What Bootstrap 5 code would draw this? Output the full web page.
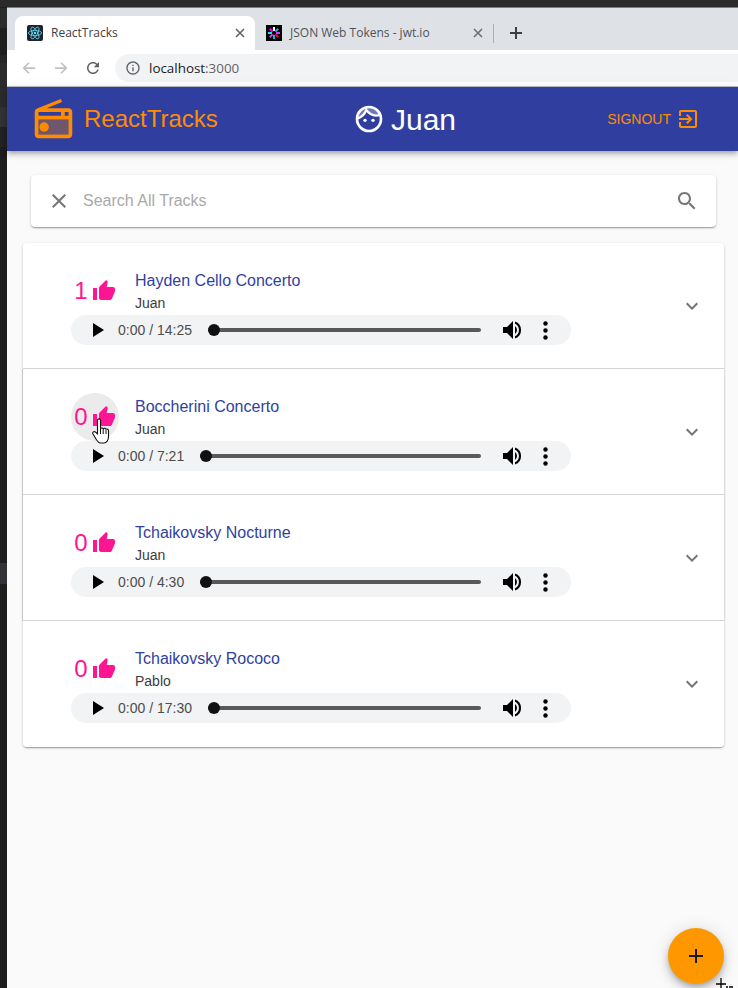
<!DOCTYPE html>
<html lang="en">
<head>
<meta charset="utf-8">
<title>ReactTracks</title>
<link href="https://cdn.jsdelivr.net/npm/bootstrap@5.3.0/dist/css/bootstrap.min.css" rel="stylesheet">
<style>
html,body{height:988px;overflow:hidden;margin:0}
body{background:#1e1e1e;font-family:"Liberation Sans",Arial,sans-serif;position:relative}
.topstrip{height:7px;background:#2b2b2b}
.blueline{height:1px;background:#3d8fd1;margin-left:7px}
.shell{height:980px}
.sidestrip{width:7px;flex:none;background:linear-gradient(#2b2b2b 0 20px,#1e1e1e 20px 47px,#252526 47px 55px,#2b2b2b 55px 99px,#333 99px 119px,#222 119px 139px,#1e1e1e 139px 555px,#333337 555px 576px,#1e1e1e 576px)}
.mainpane{flex:1;min-width:0;background:#fafafa}
.tabbar{height:42px;background:#dee1e6;padding:8px 0 0 8px;font-family:"Open Sans",sans-serif;font-size:12px;color:#3c4043}
.tab-on{width:240px;height:34px;background:#fff;border-radius:8px 8px 0 0;padding:0 10px 0 12px}
.tab-off{width:240px;height:34px;padding:0 12px 0 11px;color:#50545a}
.tab-label{margin-left:8px;white-space:nowrap}
.tab-x{margin-left:auto}
.tabsep{width:1px;height:19px;background:#a9adb2;margin:0 15px 0 -2px}
.toolbar{height:37px;background:#fff;border-bottom:1px solid #bfc1c4;padding:4px 0 4px 15px}
.omnibox{height:28px;flex:1;background:#f1f3f4;border-radius:14px 0 0 14px;padding-left:10px;margin-left:13px;font-family:"Open Sans",sans-serif;font-size:13.4px;color:#202124}
.omnibox span{color:#5f6368}
.navicon{width:32px}
.reloadicon{margin-left:-2px}
.appbar{height:64px;background:#303f9f!important;padding:0 38px 0 24px!important;flex-wrap:nowrap!important;justify-content:flex-start!important;position:relative;z-index:2;box-shadow:0 2px 4px -1px rgba(0,0,0,.2),0 4px 5px rgba(0,0,0,.14),0 1px 10px rgba(0,0,0,.12)}
.brandbox{width:322px;color:#ff8c00;font-size:24px;gap:8px}
.userbox{color:#fff;font-size:30px;gap:6px}
.signout{margin-left:auto;color:#ff8c00;font-size:14px;gap:5px;text-transform:uppercase}
.pagebody{padding:24px 14px 0 16px}
.searchcard{height:52px;margin:0 8px 16px 8px;border:0;border-radius:4px;box-shadow:0 1px 3px rgba(0,0,0,.2),0 1px 1px rgba(0,0,0,.14),0 2px 1px -1px rgba(0,0,0,.12);padding:0 17px 0 16px;flex-direction:row;align-items:center}
.searchfield{flex:1;border:0;outline:0;background:transparent;margin-left:10px;font:16px "Liberation Sans",Arial,sans-serif;color:#333}
.searchfield::placeholder{color:#a9a9a9;opacity:1}
.tracklist{border-radius:4px;box-shadow:0 1px 3px rgba(0,0,0,.2),0 1px 1px rgba(0,0,0,.14),0 2px 1px -1px rgba(0,0,0,.12)}
.trackrow{border:0;border-bottom:1px solid #d5d5d5;border-radius:0;padding:24px 20px 23px 48px;background:#fff}
.trackrow:last-child{border-bottom:0;padding-bottom:24px}
.trackrow.boxed{box-shadow:-1px 0 0 #c8c8c8,1px 0 0 #dcdcdc}
.likebtn{width:48px;height:48px;border-radius:50%;color:#ff1493;font-size:24px;gap:4px;flex:none}
.likebtn.hovered{background:#ebebeb}
.trackname{color:#303f9f;font-size:16px;line-height:24px;margin-top:2px}
.trackby{color:#3c3c3c;font-size:14px;line-height:20px}
.infobox{margin-left:16px}
.playerpill{width:500px;height:30px;background:#f1f3f4;border-radius:15px;padding:0 22px}
.playtime{color:#4d4d4d;font-size:14px;margin-left:14px;white-space:nowrap}
.tracktrack{flex:1;height:4px;background:#595959;border-radius:2px;margin-left:16px;position:relative}
.trackknob{position:absolute;left:0;top:-4px;width:12px;height:12px;border-radius:50%;background:#111}
.volicon{margin-left:22px}
.moreicon{margin-left:19.5px;margin-right:1.5px}
.fabbtn{position:absolute;right:14px;bottom:4px;width:56px;height:56px;border-radius:50%;background:#ff9800;border:0;padding:0;z-index:3;box-shadow:0 3px 5px -1px rgba(0,0,0,.2),0 6px 10px rgba(0,0,0,.14),0 1px 18px rgba(0,0,0,.12)}
.handcursor{position:absolute;left:92px;top:418px;z-index:4}
.crosscursor{position:absolute;left:714px;top:977px;z-index:5}
</style>
</head>
<body>
<div class="topstrip"></div>
<div class="blueline"></div>
<div class="shell d-flex">
  <div class="sidestrip"></div>
  <div class="mainpane">
    <div class="tabbar d-flex">
      <div class="tab-on d-flex align-items-center">
        <svg width="16" height="16" viewBox="0 0 16 16"><rect width="16" height="16" rx="2" fill="#20232a"/><g fill="none" stroke="#61dafb" stroke-width=".8"><ellipse cx="8" cy="8" rx="6.600" ry="2.600"/><ellipse cx="8" cy="8" rx="6.600" ry="2.600" transform="rotate(60 8 8)"/><ellipse cx="8" cy="8" rx="6.600" ry="2.600" transform="rotate(120 8 8)"/></g><circle cx="8" cy="8" r="1.300" fill="#61dafb"/></svg>
        <span class="tab-label">ReactTracks</span>
        <svg class="tab-x" width="10" height="10" viewBox="0 0 10 10"><path d="M1 1l8 8M9 1l-8 8" stroke="#5f6368" stroke-width="1.600"/></svg>
      </div>
      <div class="tab-off d-flex align-items-center">
        <svg width="16" height="16" viewBox="0 0 16 16"><rect width="16" height="16" fill="#000"/><g stroke-width="2" fill="none"><path d="M8 2v4" stroke="#fff"/><path d="M8 10v4" stroke="#00b9f1"/><path d="M2 8h4" stroke="#00f2e6"/><path d="M10 8h4" stroke="#d63aff"/><path d="M3.800 3.800l2.800 2.800" stroke="#f0f"/><path d="M9.400 9.400l2.800 2.800" stroke="#fb015b"/><path d="M12.200 3.800L9.400 6.600" stroke="#00b9f1"/><path d="M6.600 9.400l-2.800 2.800" stroke="#d63aff"/></g></svg>
        <span class="tab-label">JSON Web Tokens - jwt.io</span>
        <svg class="tab-x" width="10" height="10" viewBox="0 0 10 10"><path d="M1 1l8 8M9 1l-8 8" stroke="#6c7075" stroke-width="1.600"/></svg>
      </div>
      <div class="d-flex align-items-center" style="height:34px">
        <div class="tabsep"></div>
        <svg width="14" height="14" viewBox="0 0 14 14"><path d="M7 1v12M1 7h12" stroke="#3c4043" stroke-width="2"/></svg>
      </div>
    </div>
    <div class="toolbar d-flex align-items-center">
      <div class="navicon d-flex"><svg width="14" height="14" viewBox="0 0 16 16"><path d="M15 8H2.500M8 2L2 8l6 6" fill="none" stroke="#bdc1c6" stroke-width="2"/></svg></div>
      <div class="navicon d-flex"><svg width="14" height="14" viewBox="0 0 16 16"><path d="M1 8h12.500M8 2l6 6-6 6" fill="none" stroke="#bdc1c6" stroke-width="2"/></svg></div>
      <div class="d-flex reloadicon"><svg width="18" height="18" viewBox="0 0 24 24"><path d="M17.650 6.350C16.200 4.900 14.210 4 12 4c-4.420 0-7.990 3.580-7.990 8s3.570 8 7.990 8c3.730 0 6.840-2.550 7.730-6h-2.080c-.82 2.330-3.040 4-5.650 4-3.310 0-6-2.690-6-6s2.690-6 6-6c1.660 0 3.140.69 4.220 1.780L13 11h7V4l-2.350 2.350z" fill="#5f6368"/></svg></div>
      <div class="omnibox d-flex align-items-center">
        <svg width="16" height="16" viewBox="0 0 24 24"><path d="M11 7h2v2h-2zm0 4h2v6h-2zm1-9C6.480 2 2 6.480 2 12s4.480 10 10 10 10-4.480 10-10S17.520 2 12 2zm0 18c-4.410 0-8-3.590-8-8s3.590-8 8-8 8 3.590 8 8-3.590 8-8 8z" fill="#5f6368"/></svg>
        <div class="ms-2">localhost<span>:3000</span></div>
      </div>
    </div>
    <nav class="navbar appbar">
      <div class="brandbox d-flex align-items-center">
        <svg width="45" height="45" viewBox="0 0 24 24"><path d="M4 12h16v8H4z" fill="#ff8c00" opacity=".3"/><path d="M3.240 6.150C2.510 6.430 2 7.170 2 8v12c0 1.100.89 2 2 2h16c1.110 0 2-.9 2-2V8c0-1.110-.89-2-2-2H8.300l8.260-3.340L15.880 1 3.240 6.150zM20 20H4v-8h16v8zm0-10h-2V8h-2v2H4V8h16v2z" fill="#ff8c00"/><circle cx="7" cy="16" r="2.500" fill="#ff8c00"/></svg>
        <span>ReactTracks</span>
      </div>
      <div class="userbox d-flex align-items-center">
        <svg width="32" height="32" viewBox="0 0 24 24"><path d="M3.800 11.500C6.500 10.500 8.800 8 10 5.200 11.800 8 14.500 9.400 17.400 9.400c.8 0 1.600-.1 2.400-.3C18.500 5.500 15.500 3.500 12 3.500S5 5.800 3.800 11.500z" fill="#fff" opacity=".3"/><circle cx="12" cy="12" r="9" fill="none" stroke="#fff" stroke-width="2"/><path d="M3.800 11.500C6.500 10.500 8.800 8 10 5.200 11.800 8 14.500 9.400 17.400 9.400c.8 0 1.600-.1 2.400-.3" fill="none" stroke="#fff" stroke-width="1.700"/><circle cx="9" cy="13" r="1.250" fill="#fff"/><circle cx="15" cy="13" r="1.250" fill="#fff"/></svg>
        <span>Juan</span>
      </div>
      <div class="signout d-flex align-items-center">
        <span>Signout</span>
        <svg width="24" height="24" viewBox="0 0 24 24"><path d="M10.090 15.590L11.500 17l5-5-5-5-1.410 1.410L12.670 11H3v2h9.670l-2.580 2.590zM19 3H5c-1.110 0-2 .9-2 2v4h2V5h14v14H5v-4H3v4c0 1.100.89 2 2 2h14c1.100 0 2-.9 2-2V5c0-1.100-.9-2-2-2z" fill="#ff8c00"/></svg>
      </div>
    </nav>
    <div class="pagebody">
      <div class="card searchcard">
        <svg width="24" height="24" viewBox="0 0 24 24"><path d="M19 6.410L17.590 5 12 10.590 6.410 5 5 6.410 10.590 12 5 17.590 6.410 19 12 13.410 17.590 19 19 17.590 13.410 12z" fill="#757575"/></svg>
        <input class="searchfield" type="text" placeholder="Search All Tracks">
        <svg width="24" height="24" viewBox="0 0 24 24"><path d="M15.500 14h-.79l-.28-.27C15.410 12.590 16 11.110 16 9.500 16 5.910 13.090 3 9.500 3S3 5.910 3 9.500 5.910 16 9.500 16c1.610 0 3.090-.59 4.230-1.570l.27.28v.79l5 4.990L20.490 19l-4.990-5zm-6 0C7.010 14 5 11.990 5 9.500S7.010 5 9.500 5 14 7.010 14 9.500 11.990 14 9.500 14z" fill="#757575"/></svg>
      </div>
      <div class="list-group tracklist">

        <div class="list-group-item trackrow d-flex align-items-center">
          <div class="flex-grow-1">
            <div class="d-flex">
              <div class="likebtn d-flex align-items-center justify-content-center"><span>1</span><svg width="24" height="24" viewBox="0 0 24 24"><path d="M1 21h4V9H1v12zm22-11c0-1.100-.9-2-2-2h-6.310l.95-4.570.03-.32c0-.41-.17-.79-.44-1.060L14.170 1 7.590 7.590C7.220 7.950 7 8.450 7 9v10c0 1.100.9 2 2 2h9c.83 0 1.540-.5 1.840-1.220l3.020-7.050c.09-.23.14-.47.14-.73v-2z" fill="#ff1493"/></svg></div>
              <div class="infobox"><div class="trackname">Hayden Cello Concerto</div><div class="trackby">Juan</div></div>
            </div>
            <div class="playerpill d-flex align-items-center">
              <svg width="11" height="14" viewBox="0 0 11 14"><path d="M0 0l11 7-11 7z" fill="#000"/></svg>
              <span class="playtime">0:00 / 14:25</span>
              <div class="tracktrack"><div class="trackknob"></div></div>
              <svg class="volicon" width="20" height="18" viewBox="0 0 20 18"><path d="M0 6v6h4l6 6V0L4 6z" fill="#000"/><path d="M12 5a5 5 0 0 1 0 8zM12 .5v2.200a7 7 0 0 1 0 12.600v2.200a9 9 0 0 0 0-17z" fill="#000"/></svg>
              <svg class="moreicon" width="5" height="19" viewBox="0 0 5 19"><circle cx="2.500" cy="2.500" r="2.200"/><circle cx="2.500" cy="9.500" r="2.200"/><circle cx="2.500" cy="16.500" r="2.200"/></svg>
            </div>
          </div>
          <svg width="24" height="24" viewBox="0 0 24 24"><path d="M16.590 8.590L12 13.170 7.410 8.590 6 10l6 6 6-6z" fill="#757575"/></svg>
        </div>

        <div class="list-group-item trackrow boxed d-flex align-items-center">
          <div class="flex-grow-1">
            <div class="d-flex">
              <div class="likebtn hovered d-flex align-items-center justify-content-center"><span>0</span><svg width="24" height="24" viewBox="0 0 24 24"><path d="M1 21h4V9H1v12zm22-11c0-1.100-.9-2-2-2h-6.310l.95-4.570.03-.32c0-.41-.17-.79-.44-1.060L14.170 1 7.590 7.590C7.220 7.950 7 8.450 7 9v10c0 1.100.9 2 2 2h9c.83 0 1.540-.5 1.840-1.220l3.020-7.050c.09-.23.14-.47.14-.73v-2z" fill="#ff1493"/></svg></div>
              <div class="infobox"><div class="trackname">Boccherini Concerto</div><div class="trackby">Juan</div></div>
            </div>
            <div class="playerpill d-flex align-items-center">
              <svg width="11" height="14" viewBox="0 0 11 14"><path d="M0 0l11 7-11 7z" fill="#000"/></svg>
              <span class="playtime">0:00 / 7:21</span>
              <div class="tracktrack"><div class="trackknob"></div></div>
              <svg class="volicon" width="20" height="18" viewBox="0 0 20 18"><path d="M0 6v6h4l6 6V0L4 6z" fill="#000"/><path d="M12 5a5 5 0 0 1 0 8zM12 .5v2.200a7 7 0 0 1 0 12.600v2.200a9 9 0 0 0 0-17z" fill="#000"/></svg>
              <svg class="moreicon" width="5" height="19" viewBox="0 0 5 19"><circle cx="2.500" cy="2.500" r="2.200"/><circle cx="2.500" cy="9.500" r="2.200"/><circle cx="2.500" cy="16.500" r="2.200"/></svg>
            </div>
          </div>
          <svg width="24" height="24" viewBox="0 0 24 24"><path d="M16.590 8.590L12 13.170 7.410 8.590 6 10l6 6 6-6z" fill="#757575"/></svg>
        </div>

        <div class="list-group-item trackrow boxed d-flex align-items-center">
          <div class="flex-grow-1">
            <div class="d-flex">
              <div class="likebtn d-flex align-items-center justify-content-center"><span>0</span><svg width="24" height="24" viewBox="0 0 24 24"><path d="M1 21h4V9H1v12zm22-11c0-1.100-.9-2-2-2h-6.310l.95-4.570.03-.32c0-.41-.17-.79-.44-1.060L14.170 1 7.590 7.590C7.220 7.950 7 8.450 7 9v10c0 1.100.9 2 2 2h9c.83 0 1.540-.5 1.840-1.220l3.020-7.050c.09-.23.14-.47.14-.73v-2z" fill="#ff1493"/></svg></div>
              <div class="infobox"><div class="trackname">Tchaikovsky Nocturne</div><div class="trackby">Juan</div></div>
            </div>
            <div class="playerpill d-flex align-items-center">
              <svg width="11" height="14" viewBox="0 0 11 14"><path d="M0 0l11 7-11 7z" fill="#000"/></svg>
              <span class="playtime">0:00 / 4:30</span>
              <div class="tracktrack"><div class="trackknob"></div></div>
              <svg class="volicon" width="20" height="18" viewBox="0 0 20 18"><path d="M0 6v6h4l6 6V0L4 6z" fill="#000"/><path d="M12 5a5 5 0 0 1 0 8zM12 .5v2.200a7 7 0 0 1 0 12.600v2.200a9 9 0 0 0 0-17z" fill="#000"/></svg>
              <svg class="moreicon" width="5" height="19" viewBox="0 0 5 19"><circle cx="2.500" cy="2.500" r="2.200"/><circle cx="2.500" cy="9.500" r="2.200"/><circle cx="2.500" cy="16.500" r="2.200"/></svg>
            </div>
          </div>
          <svg width="24" height="24" viewBox="0 0 24 24"><path d="M16.590 8.590L12 13.170 7.410 8.590 6 10l6 6 6-6z" fill="#757575"/></svg>
        </div>

        <div class="list-group-item trackrow d-flex align-items-center">
          <div class="flex-grow-1">
            <div class="d-flex">
              <div class="likebtn d-flex align-items-center justify-content-center"><span>0</span><svg width="24" height="24" viewBox="0 0 24 24"><path d="M1 21h4V9H1v12zm22-11c0-1.100-.9-2-2-2h-6.310l.95-4.570.03-.32c0-.41-.17-.79-.44-1.060L14.170 1 7.590 7.590C7.220 7.950 7 8.450 7 9v10c0 1.100.9 2 2 2h9c.83 0 1.540-.5 1.840-1.220l3.020-7.050c.09-.23.14-.47.14-.73v-2z" fill="#ff1493"/></svg></div>
              <div class="infobox"><div class="trackname">Tchaikovsky Rococo</div><div class="trackby">Pablo</div></div>
            </div>
            <div class="playerpill d-flex align-items-center">
              <svg width="11" height="14" viewBox="0 0 11 14"><path d="M0 0l11 7-11 7z" fill="#000"/></svg>
              <span class="playtime">0:00 / 17:30</span>
              <div class="tracktrack"><div class="trackknob"></div></div>
              <svg class="volicon" width="20" height="18" viewBox="0 0 20 18"><path d="M0 6v6h4l6 6V0L4 6z" fill="#000"/><path d="M12 5a5 5 0 0 1 0 8zM12 .5v2.200a7 7 0 0 1 0 12.600v2.200a9 9 0 0 0 0-17z" fill="#000"/></svg>
              <svg class="moreicon" width="5" height="19" viewBox="0 0 5 19"><circle cx="2.500" cy="2.500" r="2.200"/><circle cx="2.500" cy="9.500" r="2.200"/><circle cx="2.500" cy="16.500" r="2.200"/></svg>
            </div>
          </div>
          <svg width="24" height="24" viewBox="0 0 24 24"><path d="M16.590 8.590L12 13.170 7.410 8.590 6 10l6 6 6-6z" fill="#757575"/></svg>
        </div>

      </div>
    </div>
  </div>
</div>
<button class="fabbtn d-flex align-items-center justify-content-center" type="button" aria-label="Add track">
  <svg width="24" height="24" viewBox="0 0 24 24"><path d="M19 13h-6v6h-2v-6H5v-2h6V5h2v6h6v2z" fill="#1a1a1a"/></svg>
</button>
<svg class="handcursor" width="18" height="26" viewBox="0 0 18 26"><path d="M5.500 2c0-1.500 3-1.500 3 0v8.500c1-.8 2.300-.6 2.700.2 1-.7 2.400-.4 2.800.5 1.200-.5 2.500.2 2.500 1.500V19c0 3-2 6-4.500 6H8.500C6.500 25 5.500 23.500 4 21L1 16c-1-1.800 1.200-3.200 2.600-1.800L5.500 16z" fill="#fff" stroke="#111" stroke-width="1.100" stroke-linejoin="round"/><path d="M8.500 11v5M11.200 11v5M14 12v4" stroke="#111" stroke-width="1"/></svg>
<svg class="crosscursor" width="24" height="11" viewBox="0 0 24 11"><path d="M7 1v10M2 7h10M12 10h2M15 10h4" stroke="#000" stroke-width="1.300"/></svg>
</body>
</html>
